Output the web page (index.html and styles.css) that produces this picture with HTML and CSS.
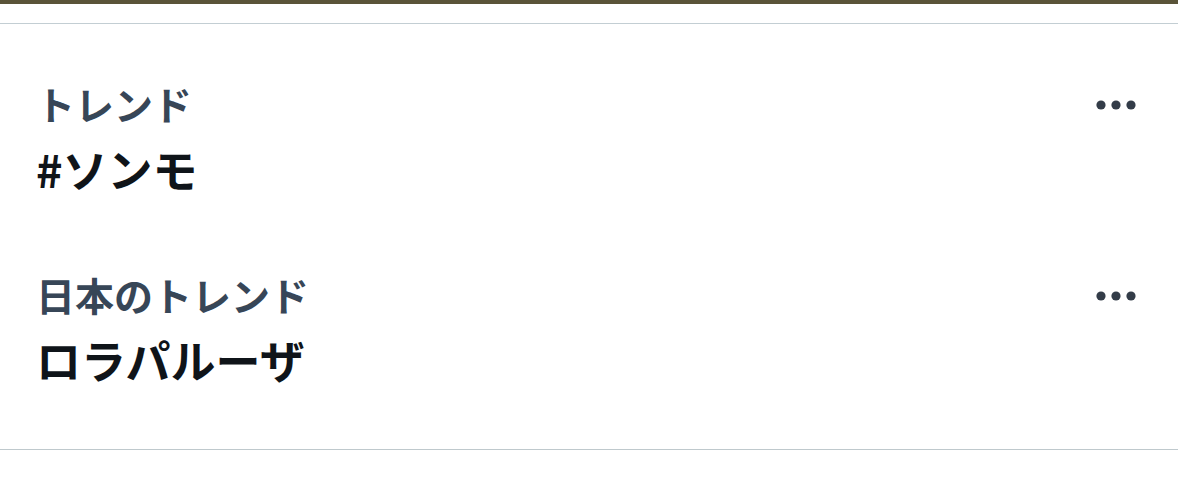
FILE: index.html
```html
<!DOCTYPE html>
<html lang="ja">

<head>
    <meta charset="UTF-8" />
    <meta name="viewport" content="width=device-width, initial-scale=1" />
    <title>トレンド</title>
    <link rel="stylesheet" href="styles.css">
</head>

<body>
    <div class="media-strip"></div>
    <div class="trends">
        <div class="trend">
            <div class="trend-text">
                <div class="trend-context">トレンド</div>
                <div class="trend-name">#ソンモ</div>
            </div>
            <button class="more" aria-label="その他">
                <svg viewBox="0 0 40 10" width="40" height="10">
                    <circle cx="5" cy="5" r="4.6" />
                    <circle cx="20" cy="5" r="4.6" />
                    <circle cx="35" cy="5" r="4.6" />
                </svg>
            </button>
        </div>
        <div class="trend">
            <div class="trend-text">
                <div class="trend-context">日本のトレンド</div>
                <div class="trend-name">ロラパルーザ</div>
            </div>
            <button class="more" aria-label="その他">
                <svg viewBox="0 0 40 10" width="40" height="10">
                    <circle cx="5" cy="5" r="4.6" />
                    <circle cx="20" cy="5" r="4.6" />
                    <circle cx="35" cy="5" r="4.6" />
                </svg>
            </button>
        </div>
    </div>
</body>

</html>
```

FILE: styles.css
```css
body {
    margin: 0;
    background: #fff;
    font-family: "Noto Sans CJK JP", "Noto Sans", sans-serif;
}

.media-strip {
    height: 4px;
    background: #5a5439;
    margin-bottom: 19px;
}

.trends {
    border-top: 1px solid #c3ced3;
    border-bottom: 1px solid #bfc9cd;
    padding: 18px 0 25px;
}

.trend {
    display: flex;
    justify-content: space-between;
    align-items: flex-start;
    padding: 38px 42px 38px 36px;
}

.trend + .trend {
    padding-top: 38px;
}

.trend-context {
    font-size: 39px;
    line-height: 46px;
    font-weight: 700;
    color: #374657;
}

.trend-name {
    margin-top: 17px;
    font-size: 45px;
    line-height: 52px;
    font-weight: 700;
    color: #0f1419;
}

.more {
    background: none;
    border: none;
    padding: 0;
    margin-top: 20px;
    display: flex;
    cursor: pointer;
}

.more svg {
    fill: #333c48;
}
```
